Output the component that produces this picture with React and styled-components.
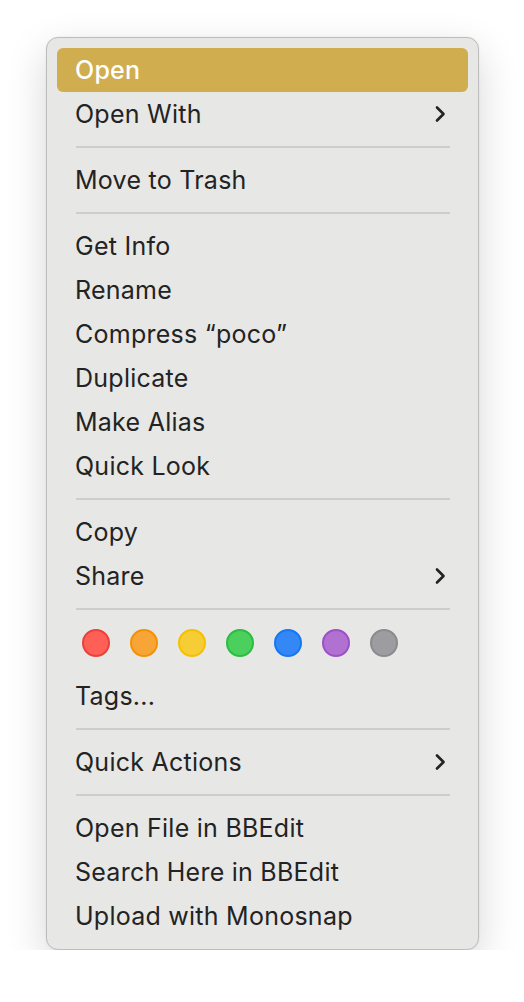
import styled, { createGlobalStyle } from "styled-components";

const GlobalStyle = createGlobalStyle`
    body {
        margin: 0;
        background: #ffffff;
        font-family: Inter, "Noto Sans", sans-serif;
    }
`;

const Page = styled.div`
    padding: 37px 0 0 46px;
`;

const Menu = styled.div`
    width: 433px;
    box-sizing: border-box;
    padding: 10px 10px 11px;
    background: #e7e7e6;
    border: 1px solid #bdbdbd;
    border-radius: 12px;
    box-shadow: 0 14px 40px rgba(0, 0, 0, 0.16), 0 0 2px rgba(0, 0, 0, 0.08);
`;

const Item = styled.div`
    height: 44px;
    display: flex;
    align-items: center;
    justify-content: space-between;
    padding: 0 22px 0 18px;
    border-radius: 6px;
    font-size: 25px;
    letter-spacing: 0.25px;
    color: ${(p) => (p.active ? "#ffffff" : "#232323")};
    background: ${(p) => (p.active ? "#d0ad4e" : "transparent")};
    font-weight: ${(p) => (p.active ? 500 : 400)};
`;

const Separator = styled.div`
    height: 2px;
    margin: 10px 18px 10px 19px;
    background: #cdcdcc;
`;

const TagRow = styled.div`
    display: flex;
    gap: 20px;
    padding: 9px 0 17px 25px;
`;

const Dot = styled.span`
    width: 28px;
    height: 28px;
    box-sizing: border-box;
    border-radius: 50%;
    background: ${(p) => p.fill};
    border: 2px solid ${(p) => p.edge};
`;

const Chevron = () => (
    <svg width="12" height="18" viewBox="0 0 12 18">
        <path d="M3 2.5 L9.5 9 L3 15.5" fill="none" stroke="#232323" strokeWidth="2.6" strokeLinecap="round" strokeLinejoin="round" />
    </svg>
);

const tags = [
    ["#fe5f57", "#ea413b"],
    ["#f8a537", "#f39200"],
    ["#f7cd35", "#f5c000"],
    ["#4bd05e", "#2bbc40"],
    ["#3388f6", "#1577f2"],
    ["#b171d0", "#9d50c7"],
    ["#9d9da1", "#8b8b8f"],
];

const App = () => {
    return (
        <>
        <GlobalStyle />
        <Page>
            <Menu>
                <Item active>Open</Item>
                <Item>Open With <Chevron /></Item>
                <Separator />
                <Item>Move to Trash</Item>
                <Separator />
                <Item>Get Info</Item>
                <Item>Rename</Item>
                <Item>Compress “poco”</Item>
                <Item>Duplicate</Item>
                <Item>Make Alias</Item>
                <Item>Quick Look</Item>
                <Separator />
                <Item>Copy</Item>
                <Item>Share <Chevron /></Item>
                <Separator />
                <TagRow>
                    {tags.map(([fill, edge]) => <Dot key={fill} fill={fill} edge={edge} />)}
                </TagRow>
                <Item>Tags...</Item>
                <Separator />
                <Item>Quick Actions <Chevron /></Item>
                <Separator />
                <Item>Open File in BBEdit</Item>
                <Item>Search Here in BBEdit</Item>
                <Item>Upload with Monosnap</Item>
            </Menu>
        </Page>
        </>
    )
}

export default App;
